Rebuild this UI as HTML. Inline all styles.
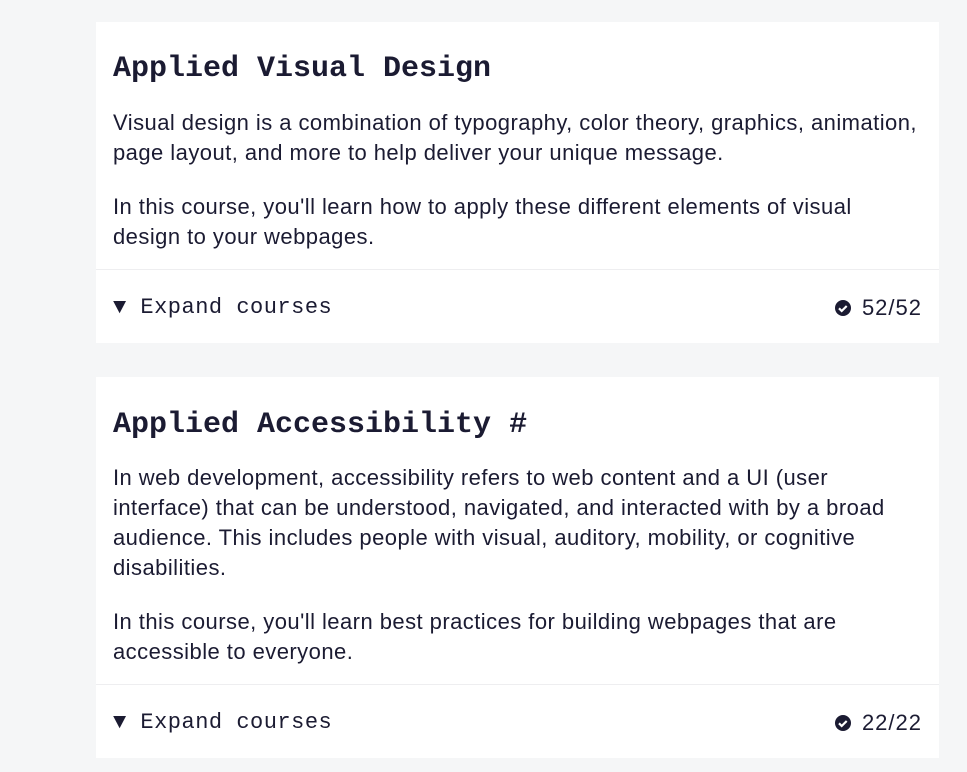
<!DOCTYPE html>
<html><head><style>
body{margin:0;background:#f5f6f7;width:967px;height:772px;overflow:hidden;font-family:"Liberation Sans",sans-serif;color:#1b1b32}
.card{position:absolute;left:96px;width:843px;background:#fff}
h2{font-family:"Liberation Mono",monospace;font-weight:bold;font-size:30px;margin:0;height:30px;line-height:30px;position:absolute;left:17px}
p{position:absolute;left:17px;margin:0;font-size:22px;line-height:30px;white-space:nowrap;letter-spacing:0.45px}
.div{position:absolute;left:0;right:0;height:1px;background:#eeeef0}
.foot{position:absolute;left:0;right:0;height:30px;font-family:"Liberation Mono",monospace;font-size:22px;line-height:30px}
.exp{position:absolute;left:17px;letter-spacing:0.5px}
.cnt{position:absolute;right:17px;display:flex;align-items:center;gap:10px;font-family:"Liberation Sans",sans-serif;font-size:22px;letter-spacing:1px}
</style></head><body>
<div class="card" style="top:22px;height:321px">
<h2 style="top:32px">Applied Visual Design</h2>
<p style="top:86px">Visual design is a combination of typography, color theory, graphics, animation,<br>page layout, and more to help deliver your unique message.</p>
<p style="top:170px">In this course, you'll learn how to apply these different elements of visual<br>design to your webpages.</p>
<div class="div" style="top:247px"></div>
<div class="foot" style="top:271px"><span class="exp">▼ Expand courses</span>
<span class="cnt"><svg width="18" height="18" viewBox="0 0 18 18"><circle cx="9" cy="9" r="8" fill="#1b1b32"/><path d="M5 9.3l2.7 2.7 5-5" stroke="#fff" stroke-width="2.2" fill="none"/></svg>52/52</span></div>
</div>
<div class="card" style="top:377px;height:381px">
<h2 style="top:33px">Applied Accessibility #</h2>
<p style="top:86px">In web development, accessibility refers to web content and a UI (user<br>interface) that can be understood, navigated, and interacted with by a broad<br>audience. This includes people with visual, auditory, mobility, or cognitive<br>disabilities.</p>
<p style="top:230px">In this course, you'll learn best practices for building webpages that are<br>accessible to everyone.</p>
<div class="div" style="top:307px"></div>
<div class="foot" style="top:331px"><span class="exp">▼ Expand courses</span>
<span class="cnt"><svg width="18" height="18" viewBox="0 0 18 18"><circle cx="9" cy="9" r="8" fill="#1b1b32"/><path d="M5 9.3l2.7 2.7 5-5" stroke="#fff" stroke-width="2.2" fill="none"/></svg>22/22</span></div>
</div>
</body></html>
